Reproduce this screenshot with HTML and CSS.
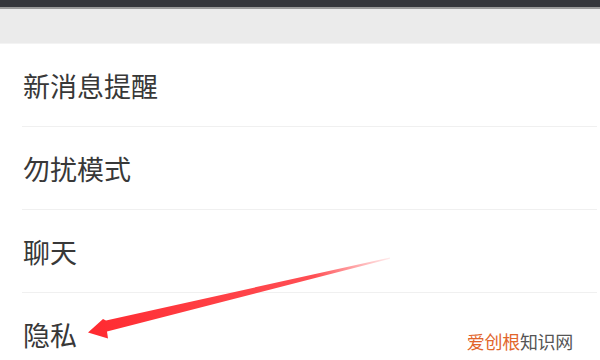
FILE: index.html
```html
<html lang="zh-CN">
<head>
  <meta charset="UTF-8">
  <meta name="viewport" content="width=device-width, initial-scale=1.0">
  <title>设置</title>
  <link rel="stylesheet" href="styles.css">
</head>
<body>
  <div id="screen">
    <div class="status-bar"></div>
    <div class="section-gap"></div>
    <ul class="settings-list">
      <li class="settings-item">新消息提醒</li>
      <li class="settings-item">勿扰模式</li>
      <li class="settings-item">聊天</li>
      <li class="settings-item">隐私</li>
    </ul>

    <!-- red annotation arrow pointing at 隐私 -->
    <svg class="annotation" width="600" height="360" viewBox="0 0 600 360">
      <defs>
        <linearGradient id="fade" x1="390" y1="258" x2="88" y2="332" gradientUnits="userSpaceOnUse">
          <stop offset="0" stop-color="#ff3b3f" stop-opacity="0.1"/>
          <stop offset="0.25" stop-color="#ff3036" stop-opacity="0.85"/>
          <stop offset="1" stop-color="#ff2a30"/>
        </linearGradient>
      </defs>
      <polygon fill="url(#fade)" points="390,257.4 106,320.5 103,319 88,332.5 108,338.5 107,331.5 390,258.8"/>
    </svg>

    <div class="watermark"><span class="brand">爱创根</span>知识网</div>
  </div>
</body>
</html>
```

FILE: styles.css
```css
body {
  margin: 0;
  padding: 0;
  overflow: hidden;
  background: #fff;
  font-family: "Noto Sans CJK SC", "Noto Sans", sans-serif;
}
#screen {
  position: relative;
  width: 600px;
  height: 360px;
  overflow: hidden;
}
.status-bar {
  height: 7px;
  background-color: #35363b;
  border-bottom: 2px solid #9a9a9a;
}
.section-gap {
  height: 34px;
  background-color: #ebebeb;
  border-bottom: 1px solid #f3f3f3;
}
.settings-list {
  list-style: none;
  margin: 0;
  padding: 0;
}
.settings-item {
  display: flex;
  align-items: center;
  height: 82px;
  padding-left: 23px;
  font-size: 27px;
  color: #383838;
  position: relative;
}
.settings-item::after {
  content: "";
  position: absolute;
  left: 22px;
  right: 3px;
  bottom: -1px;
  height: 1px;
  background: #f0f0f0;
}
.settings-item + .settings-item {
  margin-top: 1px;
}
.annotation {
  position: absolute;
  top: 0;
  left: 0;
  pointer-events: none;
}
.watermark {
  position: absolute;
  right: 27px;
  top: 328px;
  font-size: 18px;
  letter-spacing: -0.3px;
  color: #555;
}
.watermark .brand {
  color: #e2662c;
}
```
